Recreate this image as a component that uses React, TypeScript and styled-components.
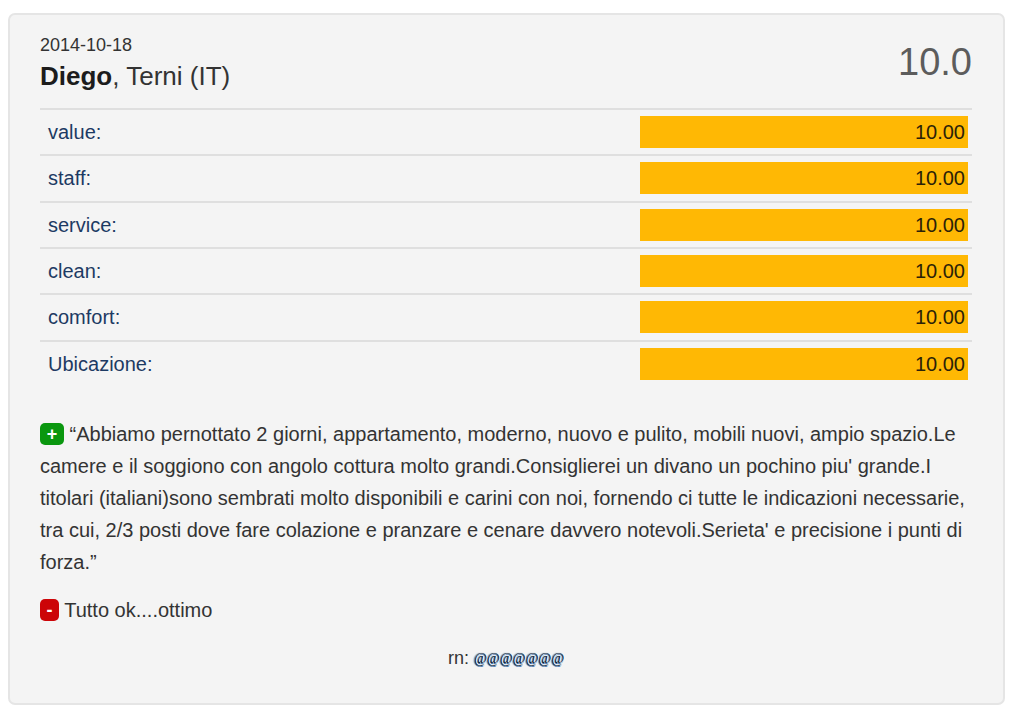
import React from "react";
import styled, { createGlobalStyle } from "styled-components";

const GlobalStyle = createGlobalStyle`
  * { box-sizing: border-box; }
  body {
    margin: 0;
    background: #fff;
    color: #333;
    font: 20px/32px "Liberation Sans", Arial, sans-serif;
  }
`;

const Page = styled.main`
  padding: 13px 19px 16px 8px;
`;

const Card = styled.article`
  padding: 16px 31px 29px 30px;
  border: 2px solid #e5e5e5;
  border-radius: 7px;
  background: #f4f4f4;
`;

const Header = styled.header`
  display: flex;
  justify-content: space-between;
  align-items: center;
  padding-bottom: 15px;
`;

const Posted = styled.time`
  display: block;
  font-size: 18px;
  line-height: 28px;
`;

const Author = styled.h1`
  margin: 0;
  font-size: 26px;
  font-weight: 400;
  line-height: 34px;

  strong { color: #1c1c1c; }
`;

const Overall = styled.output`
  font-size: 38px;
  line-height: 40px;
  color: #5c5c5c;
`;

const Scores = styled.table`
  width: 100%;
  height: 278px;
  border-collapse: separate;
  border-spacing: 0;
  table-layout: fixed;
`;

const Label = styled.th`
  padding: 0 8px;
  border-top: 2px solid #dfdfdf;
  font-weight: 400;
  text-align: left;
  color: #1d3a63;
`;

const Score = styled.td`
  width: 336px;
  padding: 6px 4px;
  border-top: 2px solid #dfdfdf;
`;

const Bar = styled.div`
  padding-right: 3px;
  background: #ffb804;
  color: #2b2208;
  text-align: right;
`;

const Comment = styled.p`
  margin: 0 0 16px;
`;

const Badge = styled.span<{ $positive?: boolean }>`
  display: inline-block;
  width: ${(p) => (p.$positive ? 24 : 19)}px;
  border-radius: 5px;
  background: ${(p) => (p.$positive ? "#0a970f" : "#cc0508")};
  color: #fff;
  font-size: 18px;
  font-weight: 700;
  line-height: 22px;
  text-align: center;
  vertical-align: 1px;
`;

const Comments = styled.section`
  padding-top: 32px;
`;

const Reference = styled.footer`
  font-size: 18px;
  text-align: center;
`;

const Masked = styled.a`
  color: #101c30;
  font: italic 14px/30px "Liberation Serif", "Times New Roman", serif;
  text-decoration: none;
  text-shadow: 1px 0 0 #f4f8fc, 0 1px 0 #2f68a8, -1px 0 1px #2f68a8;
  vertical-align: 1px;
`;

const scores = [
  ["value", "10.00"],
  ["staff", "10.00"],
  ["service", "10.00"],
  ["clean", "10.00"],
  ["comfort", "10.00"],
  ["Ubicazione", "10.00"],
];

export default function App() {
  return (
    <Page>
      <GlobalStyle />
      <Card>
        <Header>
          <div>
            <Posted dateTime="2014-10-18">2014-10-18</Posted>
            <Author>
              <strong>Diego</strong>, Terni (IT)
            </Author>
          </div>
          <Overall>10.0</Overall>
        </Header>
        <Scores>
          <tbody>
            {scores.map(([name, value]) => (
              <tr key={name}>
                <Label scope="row">{name}:</Label>
                <Score>
                  <Bar>{value}</Bar>
                </Score>
              </tr>
            ))}
          </tbody>
        </Scores>
        <Comments>
          <Comment>
            <Badge $positive>+</Badge> “Abbiamo pernottato 2 giorni, appartamento, moderno, nuovo e
            pulito, mobili nuovi, ampio spazio.Le camere e il soggiono con angolo cottura molto
            grandi.Consiglierei un divano un pochino piu' grande.I titolari (italiani)sono sembrati
            molto disponibili e carini con noi, fornendo ci tutte le indicazioni necessarie, tra cui,
            2/3 posti dove fare colazione e pranzare e cenare davvero notevoli.Serieta' e precisione
            i punti di forza.”
          </Comment>
          <Comment>
            <Badge>-</Badge> Tutto ok....ottimo
          </Comment>
        </Comments>
        <Reference>
          rn: <Masked href="#reservation">@@@@@@@</Masked>
        </Reference>
      </Card>
    </Page>
  );
}
